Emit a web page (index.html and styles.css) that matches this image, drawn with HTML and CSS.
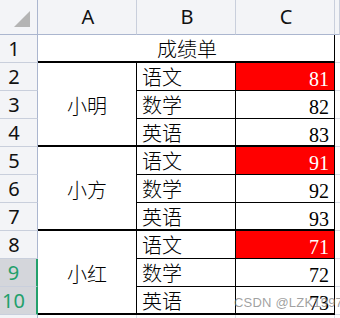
FILE: index.html
```html
<!DOCTYPE html>
<html lang="zh-CN">
<head>
<meta charset="utf-8">
<title>成绩单</title>
<link rel="stylesheet" href="styles.css">
</head>
<body>
<div class="sheet">
  <div class="corner"><span class="tri"></span></div>
  <div class="colhead">A</div>
  <div class="colhead">B</div>
  <div class="colhead">C</div>
  <div class="colhead rest"></div>

  <div class="rowhead">1</div>
  <div class="cell title">成绩单</div>
  <div class="cell rest"></div>

  <div class="rowhead">2</div>
  <div class="cell name">小明</div>
  <div class="cell subj">语文</div>
  <div class="cell num hot">81</div>
  <div class="cell rest"></div>
  <div class="rowhead">3</div>
  <div class="cell subj">数学</div>
  <div class="cell num">82</div>
  <div class="cell rest"></div>
  <div class="rowhead">4</div>
  <div class="cell subj grp">英语</div>
  <div class="cell num grp">83</div>
  <div class="cell rest"></div>

  <div class="rowhead">5</div>
  <div class="cell name">小方</div>
  <div class="cell subj">语文</div>
  <div class="cell num hot">91</div>
  <div class="cell rest"></div>
  <div class="rowhead">6</div>
  <div class="cell subj">数学</div>
  <div class="cell num">92</div>
  <div class="cell rest"></div>
  <div class="rowhead">7</div>
  <div class="cell subj grp">英语</div>
  <div class="cell num grp">93</div>
  <div class="cell rest"></div>

  <div class="rowhead">8</div>
  <div class="cell name">小红</div>
  <div class="cell subj">语文</div>
  <div class="cell num hot">71</div>
  <div class="cell rest"></div>
  <div class="rowhead sel">9</div>
  <div class="cell subj">数学</div>
  <div class="cell num">72</div>
  <div class="cell rest"></div>
  <div class="rowhead sel">10</div>
  <div class="cell subj grp">英语</div>
  <div class="cell num grp">73</div>
  <div class="cell rest"></div>

  <div class="rowhead tail"></div>
  <div class="cell tailcell"></div>
  <div class="cell tailcell"></div>
  <div class="cell tailcell"></div>
  <div class="cell tailcell rest"></div>
</div>
<div class="watermark">CSDN @LZK1997</div>
</body>
</html>
```

FILE: styles.css
```css
html, body {
  margin: 0;
  padding: 0;
  background: #ffffff;
}

body {
  width: 340px;
  height: 318px;
  overflow: hidden;
  position: relative;
  font-family: "Noto Sans CJK SC", "Noto Sans", sans-serif;
}

.sheet {
  display: grid;
  grid-template-columns: 38px 99px 99px 99px 1fr;
  grid-template-rows: 35px repeat(10, 28px) 1fr;
  height: 318px;
}

.sheet > div {
  box-sizing: border-box;
}

.corner {
  background: #f3f4f7;
  border-right: 1px solid #abb6cf;
  border-bottom: 1px solid #abb6cf;
  position: relative;
}

.tri {
  position: absolute;
  left: 14px;
  top: 11px;
  width: 0;
  height: 0;
  border-left: 16px solid transparent;
  border-bottom: 16px solid #b4b4b4;
}

.colhead {
  background: #f3f4f7;
  border-right: 1px solid #c9cfdc;
  border-bottom: 1px solid #abb6cf;
  font-family: "Noto Sans", sans-serif;
  font-size: 20px;
  line-height: 34px;
  text-align: center;
  color: #111;
  padding-left: 2px;
}

.rowhead {
  background: #f3f4f7;
  border-right: 1px solid #abb6cf;
  border-bottom: 1px solid #c9cfdc;
  font-family: "Noto Sans", sans-serif;
  font-size: 20px;
  line-height: 28px;
  text-align: center;
  padding-right: 9px;
  color: #111;
}

.rowhead.sel {
  background: #d4d6db;
  color: #22a06b;
  border-right: 2px solid #22a06b;
}

.rowhead.tail {
  border-bottom: none;
}

.cell {
  border-right: 1px solid #d9dde6;
  border-bottom: 1px solid #d9dde6;
  font-size: 20px;
  font-weight: 300;
  line-height: 28px;
  color: #000;
  white-space: nowrap;
}

.cell.rest {
  border-right: none;
}

.cell.tailcell {
  border-bottom: none;
}

.title {
  grid-column: span 3;
  text-align: center;
  border-right: 1px solid #000;
  border-bottom: 2px solid #000;
  line-height: 27px;
  padding-left: 2px;
}

.name {
  grid-row: span 3;
  display: flex;
  align-items: center;
  justify-content: center;
  border-right: 1px solid #000;
  border-bottom: 2px solid #000;
  padding-top: 3px;
}

.subj {
  border-right: 1px solid #000;
  border-bottom: 1px solid #000;
  padding-left: 5px;
}

.num {
  border-right: 1px solid #000;
  border-bottom: 1px solid #000;
  font-family: "Liberation Serif", serif;
  font-weight: 400;
  text-align: right;
  padding-right: 5px;
  padding-top: 2px;
}

.grp {
  border-bottom: 2px solid #000;
}

.hot {
  background: #ff0000;
  color: #ffffff;
}

.watermark {
  position: absolute;
  left: 234px;
  top: 295px;
  font-family: "Liberation Sans", sans-serif;
  font-size: 13px;
  white-space: nowrap;
  color: rgba(130, 130, 130, 0.75);
  letter-spacing: 0.2px;
  pointer-events: none;
}
```
